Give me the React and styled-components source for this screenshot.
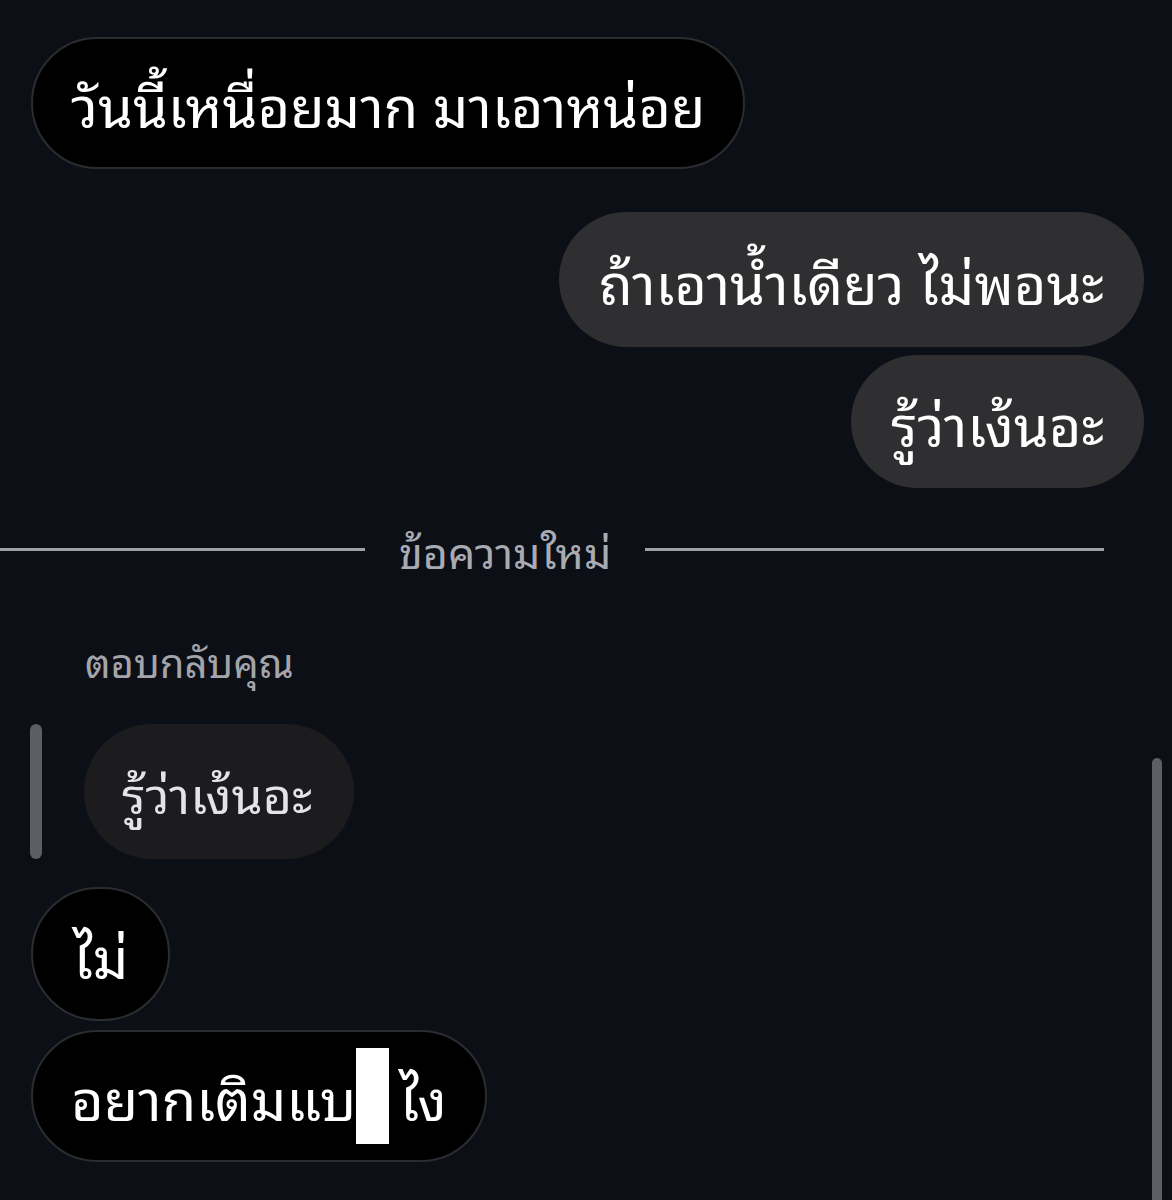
import styled, { createGlobalStyle } from "styled-components";

const GlobalStyle = createGlobalStyle`
    html, body {
        margin: 0;
        padding: 0;
        background: #0c0f16;
    }
    body {
        font-family: "Noto Sans Thai Looped", "Loma", "Garuda", "Tlwg Typo", "Noto Sans Thai", "Noto Sans", sans-serif;
    }
`;

const Pagina = styled.div`
    position: relative;
    width: 1172px;
    height: 1200px;
    overflow: hidden;
    background: #0c0f16;
    padding-top: 37px;
    box-sizing: border-box;
    display: flex;
    flex-direction: column;
`;

const Linha = styled.div`
    display: flex;
    justify-content: ${(p) => (p.$meu ? "flex-end" : "flex-start")};
    padding: 0 28px 0 31px;
    margin-top: ${(p) => p.$topo || 0}px;
`;

const Balao = styled.div`
    position: relative;
    box-sizing: border-box;
    height: ${(p) => p.$altura || 133}px;
    display: flex;
    align-items: center;
    padding: 0 ${(p) => p.$lado || 40}px;
    border-radius: 70px;
    font-size: 56px;
    line-height: 1;
    color: #ffffff;
    white-space: nowrap;
    background: ${(p) => (p.$meu ? "#2f2f31" : "#000000")};
    border: ${(p) => (p.$meu ? "none" : "2px solid #2b2c30")};
`;

const Divisor = styled.div`
    display: flex;
    align-items: center;
    width: 1104px;
    margin-top: 40px;
    gap: 34px;
`;

const Traco = styled.div`
    flex: ${(p) => (p.$esq ? "0 0 365px" : "1")};
    height: 3px;
    background: #9fa1a8;
`;

const TextoDivisor = styled.span`
    font-size: 43px;
    color: #a9abb2;
    line-height: 1;
`;

const RotuloResposta = styled.div`
    margin-top: 69px;
    padding-left: 85px;
    font-size: 40px;
    color: #a3a5ab;
    line-height: 1;
`;

const BlocoCitacao = styled.div`
    display: flex;
    align-items: stretch;
    gap: 42px;
    padding-left: 30px;
    margin-top: 44px;
`;

const BarraCitacao = styled.div`
    width: 12px;
    border-radius: 6px;
    background: #5d5e63;
`;

const BalaoCitacao = styled.div`
    height: 135px;
    box-sizing: border-box;
    display: flex;
    align-items: center;
    padding: 0 42px 0 38px;
    border-radius: 70px;
    background: #1c1c1e;
    color: #e4e4e6;
    font-size: 50px;
    line-height: 1;
`;

const Tarja = styled.span`
    display: inline-block;
    width: 33px;
    height: 96px;
    background: #ffffff;
    margin: 0 10px 0 0;
    align-self: center;
`;

const Rolagem = styled.div`
    position: absolute;
    right: 10px;
    top: 758px;
    width: 10px;
    height: 460px;
    border-radius: 5px;
    background: #5e5f64;
`;

function App() {
    return (
        <>
            <GlobalStyle />
            <Pagina>
                <Linha>
                    <Balao $altura={132} $lado={38}>วันนี้เหนื่อยมาก มาเอาหน่อย</Balao>
                </Linha>
                <Linha $meu $topo={43}>
                    <Balao $meu $altura={135} $lado={40}>ถ้าเอาน้ำเดียว ไม่พอนะ</Balao>
                </Linha>
                <Linha $meu $topo={8}>
                    <Balao $meu $altura={133} $lado={40}>รู้ว่าเง้นอะ</Balao>
                </Linha>
                <Divisor>
                    <Traco $esq />
                    <TextoDivisor>ข้อความใหม่</TextoDivisor>
                    <Traco />
                </Divisor>
                <RotuloResposta>ตอบกลับคุณ</RotuloResposta>
                <BlocoCitacao>
                    <BarraCitacao />
                    <BalaoCitacao>รู้ว่าเง้นอะ</BalaoCitacao>
                </BlocoCitacao>
                <Linha $topo={28}>
                    <Balao $altura={134} $lado={40}>ไม่</Balao>
                </Linha>
                <Linha $topo={9}>
                    <Balao $altura={132} $lado={38}>
                        อยากเติมแบ<Tarja />ไง
                    </Balao>
                </Linha>
                <Rolagem />
            </Pagina>
        </>
    );
}

export default App;
